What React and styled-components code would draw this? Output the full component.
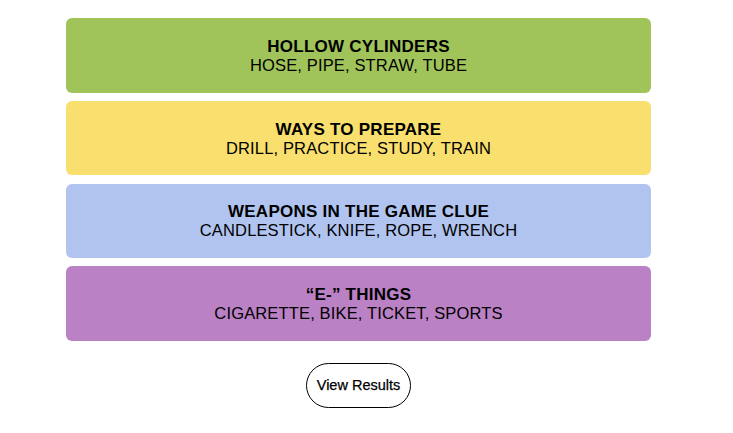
import React from "react";
import styled, { createGlobalStyle } from "styled-components";

const Global = createGlobalStyle`
  body {
    margin: 0;
    background: #fff;
    font-family: "Liberation Sans", Arial, sans-serif;
    color: #000;
  }
`;

const Page = styled.div`
  width: 585px;
  padding: 18px 0 0 66px;
  display: flex;
  flex-direction: column;
  align-items: center;
`;

const Board = styled.div`
  width: 100%;
  display: flex;
  flex-direction: column;
  gap: 8.3px;
`;

const Group = styled.div`
  height: 74.5px;
  box-sizing: border-box;
  padding-top: 2px;
  border-radius: 6px;
  background: ${(p) => p.$color};
  display: flex;
  flex-direction: column;
  align-items: center;
  justify-content: center;
`;

const Title = styled.div`
  font-weight: 700;
  font-size: 17px;
  line-height: 18px;
  letter-spacing: 0.25px;
`;

const Words = styled.div`
  font-size: 16.5px;
  line-height: 19px;
  letter-spacing: 0.15px;
`;

const ResultsButton = styled.button`
  margin-top: 22px;
  width: 105px;
  height: 45px;
  border: 1px solid #000;
  border-radius: 999px;
  background: #fff;
  font-family: "Liberation Sans", Arial, sans-serif;
  font-size: 14.5px;
  color: #000;
  -webkit-text-stroke: 0.25px #000;
`;

const groups = [
  { color: "#a0c35a", title: "HOLLOW CYLINDERS", words: "HOSE, PIPE, STRAW, TUBE" },
  { color: "#f9df6d", title: "WAYS TO PREPARE", words: "DRILL, PRACTICE, STUDY, TRAIN" },
  { color: "#b0c4ef", title: "WEAPONS IN THE GAME CLUE", words: "CANDLESTICK, KNIFE, ROPE, WRENCH" },
  { color: "#ba81c5", title: "\u201cE-\u201d THINGS", words: "CIGARETTE, BIKE, TICKET, SPORTS" },
];

const App = () => {
  return (
    <>
      <Global />
      <Page>
        <Board>
          {groups.map((g) => (
            <Group key={g.title} $color={g.color}>
              <Title>{g.title}</Title>
              <Words>{g.words}</Words>
            </Group>
          ))}
        </Board>
        <ResultsButton>View Results</ResultsButton>
      </Page>
    </>
  );
};

export default App;
